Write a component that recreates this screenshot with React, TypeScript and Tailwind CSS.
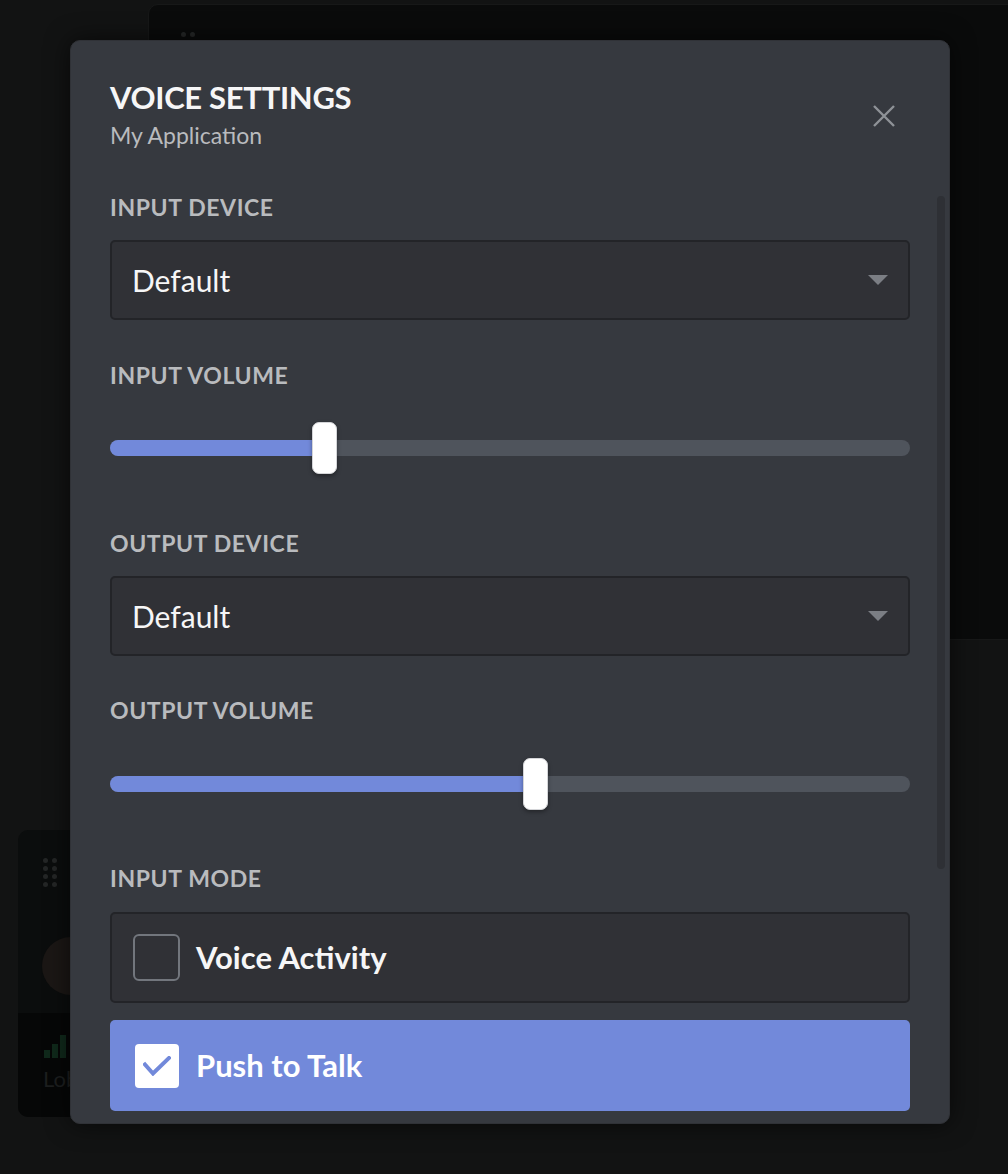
import React from "react";

const font = "font-['Lato','Noto_Sans',sans-serif]";

const Label = ({ children }: { children: React.ReactNode }) => (
  <p className="text-[23px] font-bold uppercase leading-[24px] tracking-[0.6px] text-[#b9bbbe]">
    {children}
  </p>
);

const Select = ({ value }: { value: string }) => (
  <div className="flex h-[80px] items-center justify-between rounded-[5px] border-2 border-[#232428] bg-[#303136] pl-[20px] pr-[20px]">
    <span className="text-[30px] leading-none text-[#f6f6f7]">{value}</span>
    <svg width="20" height="10" viewBox="0 0 20 10">
      <path d="M0 0h20L10 10z" fill="#7b7e84" />
    </svg>
  </div>
);

const Slider = ({ value }: { value: number }) => (
  <div className="relative h-[52px]">
    <div className="absolute left-0 right-0 top-[18px] h-[16px] rounded-full bg-[#4f545c]" />
    <div
      className="absolute left-0 top-[18px] h-[16px] rounded-full bg-[#7289da]"
      style={{ width: `${value}%` }}
    />
    <div
      className="absolute top-0 -ml-[12px] h-[52px] w-[25px] rounded-[7px] border border-[#d4d5d8] bg-white shadow-[0_2px_4px_rgba(0,0,0,0.35)]"
      style={{ left: `${value}%` }}
    />
  </div>
);

const Check = () => (
  <svg width="28" height="20" viewBox="0 0 28 20" fill="none">
    <path
      d="M2 8.5l8 9L26 2"
      stroke="#7289da"
      strokeWidth="4"
      strokeLinecap="square"
      strokeLinejoin="miter"
    />
  </svg>
);

const Dots = ({ color }: { color: string }) => (
  <div className="grid w-fit grid-cols-[5px_5px] gap-x-[4px] gap-y-[3px]">
    {Array.from({ length: 8 }).map((_, i) => (
      <span key={i} className={`h-[5px] w-[5px] rounded-full ${color}`} />
    ))}
  </div>
);

export default function App() {
  return (
    <div className={`relative h-[1174px] w-[1008px] overflow-hidden bg-[#121313] ${font}`}>
      {/* background window, top */}
      <div className="absolute left-[148px] top-[4px] h-[636px] w-[900px] rounded-[10px] border border-[#171818] bg-[#0a0b0b]">
        <div className="ml-[32px] mt-[27px]">
          <Dots color="bg-[#252727]" />
        </div>
      </div>

      {/* background card, bottom left */}
      <div className="absolute left-[18px] top-[830px] flex h-[287px] w-[220px] flex-col overflow-hidden rounded-[10px] bg-[#0b0d0d]">
        <div className="ml-[25px] mt-[28px]">
          <Dots color="bg-[#242626]" />
        </div>
        <div className="ml-[24px] mt-[50px] h-[58px] w-[58px] rounded-full bg-[#1b1715]" />
        <div className="mt-[18px] flex flex-1 flex-col bg-[#060707] pl-[26px] pt-[22px]">
          <div className="flex items-end gap-[2px]">
            <span className="h-[8px] w-[6px] bg-[#10291b]" />
            <span className="h-[14px] w-[6px] bg-[#10291b]" />
            <span className="h-[23px] w-[6px] bg-[#10291b]" />
          </div>
          <span className="-ml-[1px] mt-[6px] text-[22px] leading-[30px] text-[#1d1f1f]">Lobby</span>
        </div>
      </div>

      {/* modal */}
      <div className="absolute left-[70px] top-[40px] h-[1084px] w-[880px] overflow-hidden rounded-[10px] border border-[#303237] bg-[#36393f] px-[39px] pt-[38px] shadow-[0_0_24px_rgba(0,0,0,0.6)]">
        <div className="absolute right-[4px] top-[155px] h-[673px] w-[8px] rounded-full bg-[#2e3035]" />

        <div className="flex items-start justify-between">
          <div>
            <h1 className="text-[31px] font-bold uppercase leading-[36px] tracking-[-0.3px] text-[#f6f6f7]">
              Voice Settings
            </h1>
            <p className="mt-[6px] text-[23px] leading-[28px] text-[#b9bbbe]">My Application</p>
          </div>
          <svg className="mr-[15px] mt-[26px]" width="22" height="22" viewBox="0 0 22 22">
            <path d="M1 1l20 20M21 1L1 21" stroke="#8e9297" strokeWidth="2.4" />
          </svg>
        </div>

        <div className="mt-[46px]">
          <Label>Input Device</Label>
        </div>
        <div className="mt-[21px]">
          <Select value="Default" />
        </div>

        <div className="mt-[43px]">
          <Label>Input Volume</Label>
        </div>
        <div className="mt-[35px]">
          <Slider value={26.8} />
        </div>

        <div className="mt-[57px]">
          <Label>Output Device</Label>
        </div>
        <div className="mt-[21px]">
          <Select value="Default" />
        </div>

        <div className="mt-[42px]">
          <Label>Output Volume</Label>
        </div>
        <div className="mt-[36px]">
          <Slider value={53.1} />
        </div>

        <div className="mt-[56px]">
          <Label>Input Mode</Label>
        </div>

        <div className="mt-[22px] flex h-[91px] items-center gap-[16px] rounded-[5px] border-2 border-[#232428] bg-[#303136] pl-[21px]">
          <span className="h-[47px] w-[47px] rounded-[6px] border-2 border-[#72767d]" />
          <span className="text-[31px] font-bold leading-none text-[#f6f6f7]">Voice Activity</span>
        </div>

        <div className="mt-[17px] flex h-[91px] items-center gap-[17px] rounded-[5px] bg-[#7289da] pl-[25px]">
          <span className="flex h-[44px] w-[44px] items-center justify-center rounded-[4px] bg-white">
            <Check />
          </span>
          <span className="text-[31px] font-bold leading-none text-white">Push to Talk</span>
        </div>
      </div>
    </div>
  );
}
